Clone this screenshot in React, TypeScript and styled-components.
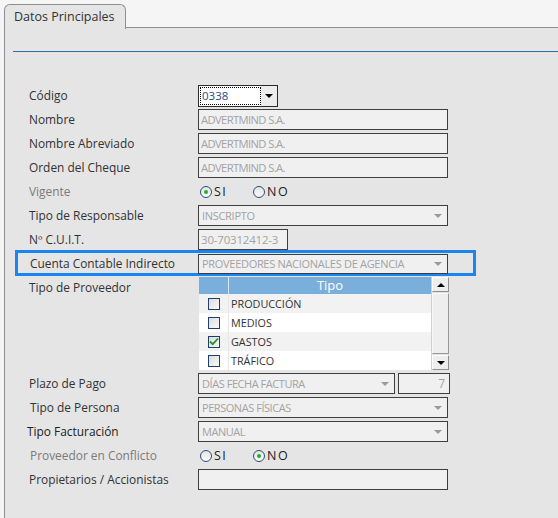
import styled, { createGlobalStyle, css } from 'styled-components';

const GlobalStyle = createGlobalStyle`
	body {
		margin: 0;
		background: #f5f5f5;
		font-family: 'Open Sans', 'Noto Sans', sans-serif;
	}
`;

type Option = { label: string; checked: boolean };

const tipos: Option[] = [
	{ label: 'PRODUCCIÓN', checked: false },
	{ label: 'MEDIOS', checked: false },
	{ label: 'GASTOS', checked: true },
	{ label: 'TRÁFICO', checked: false },
];

function Caret({ color = '#9a9a9a', up }: { color?: string; up?: boolean }) {
	return (
		<svg width="8" height="4" viewBox="0 0 8 4">
			<path d={up ? 'M0 4 H8 L4 0 Z' : 'M0 0 H8 L4 4 Z'} fill={color} />
		</svg>
	);
}

function Radio({ checked }: { checked?: boolean }) {
	return <RadioCircle>{checked && <RadioDot />}</RadioCircle>;
}

function CheckBox({ checked }: { checked: boolean }) {
	return (
		<Box>
			{checked && (
				<svg width="10" height="9" viewBox="0 0 10 9">
					<path d="M1 4.5 L3.8 7.2 L9 1.5" stroke="#1f9a2a" strokeWidth="1.8" fill="none" />
				</svg>
			)}
		</Box>
	);
}

function App() {
	return (
		<>
			<GlobalStyle />
			<Page>
				<TabStrip>
					<Tab>Datos Principales</Tab>
					<TabFiller />
				</TabStrip>
				<Panel>
					<Divider />
					<Form>
						<Row>
							<Label>Código</Label>
							<CodeSelect>
								<CodeValue>0338</CodeValue>
								<CodeButton>
									<Caret color="#000" />
								</CodeButton>
							</CodeSelect>
						</Row>
						<Row>
							<Label>Nombre</Label>
							<Field narrow>ADVERTMIND S.A.</Field>
						</Row>
						<Row>
							<Label>Nombre Abreviado</Label>
							<Field narrow>ADVERTMIND S.A.</Field>
						</Row>
						<Row>
							<Label>Orden del Cheque</Label>
							<Field narrow>ADVERTMIND S.A.</Field>
						</Row>
						<Row>
							<Label muted>Vigente</Label>
							<Radios>
								<RadioOption>
									<Radio checked />
									SI
								</RadioOption>
								<RadioOption>
									<Radio />
									NO
								</RadioOption>
							</Radios>
						</Row>
						<Row>
							<Label>Tipo de Responsable</Label>
							<Select>
								INSCRIPTO
								<Caret />
							</Select>
						</Row>
						<Row>
							<Label>Nº C.U.I.T.</Label>
							<Field width={90}>30-70312412-3</Field>
						</Row>
						<HighlightRow>
							<Label shift={1}>Cuenta Contable Indirecto</Label>
							<Select height={20}>
								PROVEEDORES NACIONALES DE AGENCIA
								<Caret />
							</Select>
						</HighlightRow>
						<ListRow>
							<Label>Tipo de Proveedor</Label>
							<List>
								<Grid>
									<HeaderRow>
										<CheckCell header />
										<HeaderTitle>Tipo</HeaderTitle>
									</HeaderRow>
									{tipos.map((t, i) => (
										<ItemRow key={t.label} striped={i % 2 === 0}>
											<CheckCell>
												<CheckBox checked={t.checked} />
											</CheckCell>
											<ItemText>{t.label}</ItemText>
										</ItemRow>
									))}
								</Grid>
								<ScrollBar>
									<ScrollButton>
										<Caret color="#000" up />
									</ScrollButton>
									<Thumb />
									<ScrollButton>
										<Caret color="#000" />
									</ScrollButton>
								</ScrollBar>
							</List>
						</ListRow>
						<Row>
							<Label>Plazo de Pago</Label>
							<Pair>
								<Select width={197} narrow>
									DÍAS FECHA FACTURA
									<Caret />
								</Select>
								<NumberField>7</NumberField>
							</Pair>
						</Row>
						<Row>
							<Label shift={1}>Tipo de Persona</Label>
							<Select narrow>
								PERSONAS FÍSICAS
								<Caret />
							</Select>
						</Row>
						<Row>
							<Label shift={-2} strong>
								Tipo Facturación
							</Label>
							<Select narrow>
								MANUAL
								<Caret />
							</Select>
						</Row>
						<Row>
							<Label muted shift={1}>
								Proveedor en Conflicto
							</Label>
							<Radios>
								<RadioOption>
									<Radio />
									SI
								</RadioOption>
								<RadioOption>
									<Radio checked />
									NO
								</RadioOption>
							</Radios>
						</Row>
						<Row>
							<Label>Propietarios / Accionistas</Label>
							<Field />
						</Row>
					</Form>
				</Panel>
			</Page>
		</>
	);
}

export default App;

const Page = styled.div`
	width: 558px;
	height: 518px;
	padding-top: 3px;
	padding-left: 4px;
	box-sizing: border-box;
	display: flex;
	flex-direction: column;
	overflow: hidden;
`;

const TabStrip = styled.div`
	display: flex;
	align-items: flex-end;
	height: 25px;
`;

const Tab = styled.div`
	width: 122px;
	height: 25px;
	box-sizing: border-box;
	border: 1px solid #8c9091;
	border-bottom: none;
	border-radius: 6px 6px 0 0;
	background: #e5e5e5;
	color: #333;
	font-size: 12.5px;
	padding: 3px 0 0 9px;
	position: relative;
	z-index: 1;
	margin-bottom: -1px;
`;

const TabFiller = styled.div`
	flex: 1;
	border-bottom: 1px solid #8c9091;
`;

const Panel = styled.div`
	flex: 1;
	background: #e5e5e5;
	border-left: 1px solid #8c9091;
	padding-top: 23px;
`;

const Divider = styled.div`
	height: 1px;
	margin-left: 8px;
	background: #2d6fa6;
`;

const Form = styled.div`
	display: flex;
	flex-direction: column;
	margin-top: 33px;
	margin-left: 10px;
	width: 461px;
`;

const rowBase = css`
	display: grid;
	grid-template-columns: 169px 1fr;
	align-items: start;
	padding-left: 14px;
`;

const Row = styled.div`
	${rowBase};
	height: 24px;
`;

const HighlightRow = styled.div`
	${rowBase};
	height: 26px;
	box-sizing: border-box;
	border: 3px solid #1a84f2;
	padding-left: 11px;
	margin-top: -3px;
	margin-bottom: 1px;
	align-items: center;
`;

const ListRow = styled.div`
	${rowBase};
	height: 96px;
`;

const Label = styled.div<{ muted?: boolean; shift?: number; strong?: boolean }>`
	font-size: 11.9px;
	line-height: 21px;
	color: ${(p) => (p.muted ? '#7b7b7b' : p.strong ? '#222' : '#333')};
	margin-left: ${(p) => p.shift ?? 0}px;
	white-space: nowrap;
`;

const inputBase = css`
	box-sizing: border-box;
	height: 21px;
	border: 1px solid #3e3e3e;
	background: #f0f0f0;
	color: #a3a3a3;
	font-size: 11px;
	display: flex;
	align-items: center;
	padding: 0 2px;
	white-space: nowrap;
	overflow: hidden;
`;

const Field = styled.div<{ width?: number; narrow?: boolean }>`
	${inputBase};
	width: ${(p) => p.width ?? 250}px;
	font-size: ${(p) => (p.narrow ? '11.2px' : '11.5px')};
	letter-spacing: ${(p) => (p.narrow ? '-0.6px' : '-0.2px')};
`;

const Select = styled.div<{ width?: number; height?: number; narrow?: boolean }>`
	${inputBase};
	width: ${(p) => p.width ?? 250}px;
	height: ${(p) => p.height ?? 21}px;
	justify-content: space-between;
	letter-spacing: ${(p) => (p.narrow ? '-0.45px' : '-0.3px')};
	padding: 0 5px 0 3px;
	svg {
		flex-shrink: 0;
	}
`;

const Pair = styled.div`
	display: flex;
	gap: 3px;
`;

const NumberField = styled.div`
	${inputBase};
	width: 52px;
	justify-content: flex-end;
	font-size: 12px;
	padding-right: 4px;
`;

const CodeSelect = styled.div`
	box-sizing: border-box;
	width: 80px;
	height: 22px;
	border: 1px solid #2a2a2a;
	background: #fff;
	display: flex;
	padding: 1px;
`;

const CodeValue = styled.div`
	flex: 1;
	border: 1px dotted #000;
	font-size: 11.5px;
	color: #2a4a8a;
	line-height: 16px;
	padding-left: 1px;
`;

const CodeButton = styled.div`
	width: 16px;
	background: #ececec;
	display: flex;
	align-items: center;
	justify-content: center;
	margin: -1px -1px -1px 0;
`;

const Radios = styled.div`
	display: flex;
	gap: 15px;
	height: 21px;
	align-items: center;
	padding-left: 2px;
`;

const RadioOption = styled.div`
	display: flex;
	align-items: center;
	gap: 2px;
	font-size: 12.5px;
	color: #222;
	letter-spacing: 1.5px;
	width: 38px;
`;

const RadioCircle = styled.div`
	width: 12px;
	height: 12px;
	box-sizing: border-box;
	border-radius: 50%;
	border: 1px solid #2c4c78;
	background: linear-gradient(#e4e4e4, #fafafa);
	display: flex;
	align-items: center;
	justify-content: center;
`;

const RadioDot = styled.div`
	width: 4px;
	height: 4px;
	border-radius: 50%;
	background: #22b02c;
`;

const List = styled.div`
	display: flex;
	width: 250px;
	height: 93px;
	margin-left: 1px;
`;

const Grid = styled.div`
	flex: 1;
	display: flex;
	flex-direction: column;
	background: #fff;
`;

const HeaderRow = styled.div`
	display: flex;
	height: 17px;
	background: #7aaedb;
`;

const HeaderTitle = styled.div`
	flex: 1;
	text-align: center;
	color: #fff;
	font-size: 13px;
	line-height: 17px;
`;

const ItemRow = styled.div<{ striped: boolean }>`
	display: flex;
	height: 19px;
	background: ${(p) => (p.striped ? '#f2f2f2' : '#ffffff')};
`;

const CheckCell = styled.div<{ header?: boolean }>`
	width: 29px;
	border-right: 1px solid ${(p) => (p.header ? '#d8e6f2' : '#e6e6e6')};
	display: flex;
	align-items: center;
	justify-content: center;
	flex-shrink: 0;
`;

const Box = styled.div`
	width: 12px;
	height: 12px;
	box-sizing: border-box;
	border: 1px solid #1d3f6b;
	background: linear-gradient(135deg, #dcdcdc, #fafafa);
	display: flex;
	align-items: center;
	justify-content: center;
`;

const ItemText = styled.div`
	padding-left: 2px;
	font-size: 10.8px;
	color: #333;
	line-height: 19px;
`;

const ScrollBar = styled.div`
	width: 17px;
	background: #e0e0e0;
	display: flex;
	flex-direction: column;
	border-left: 1px solid #d0d0d0;
`;

const raised = css`
	box-sizing: border-box;
	border: 1px solid;
	border-color: #ffffff #8f8f8f #8f8f8f #ffffff;
	background: #eeeeee;
`;

const ScrollButton = styled.div`
	${raised};
	height: 15px;
	display: flex;
	align-items: center;
	justify-content: center;
`;

const Thumb = styled.div`
	${raised};
	flex: 1;
	margin: 1px 0;
	border-color: #f8f8f8 #9a9a9a #9a9a9a #f8f8f8;
`;
